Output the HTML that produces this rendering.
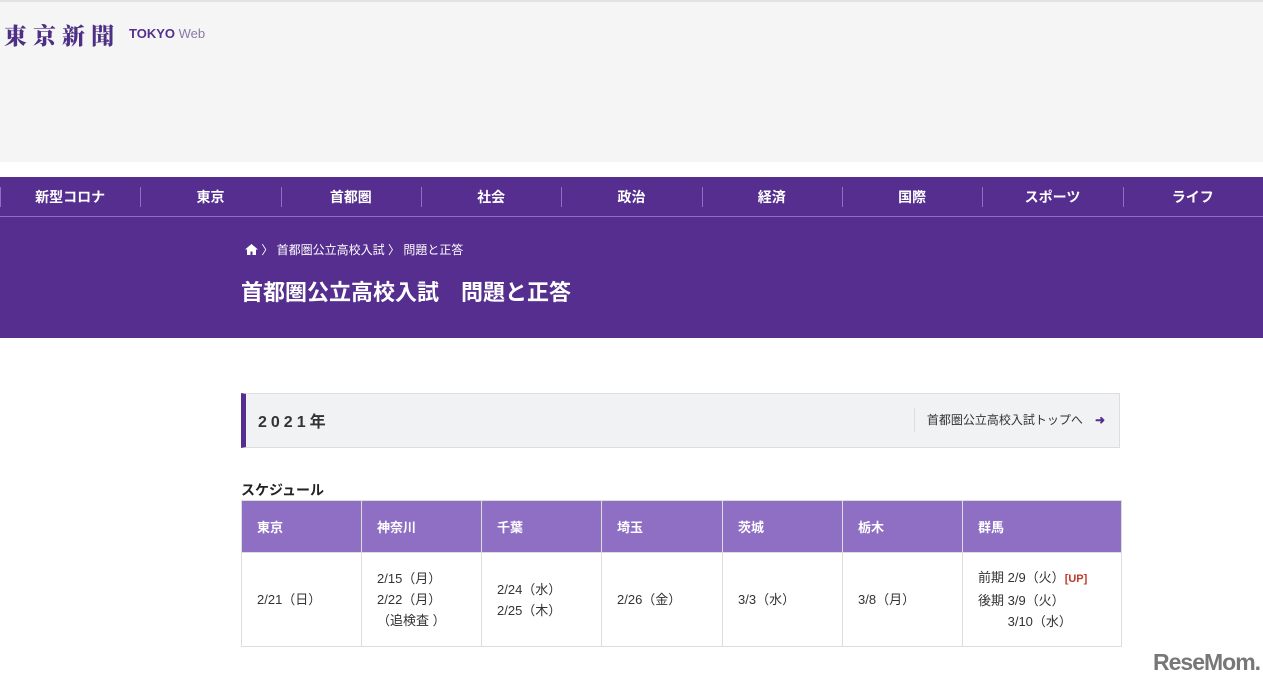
<html><head><style>
body{margin:0;width:1263px;height:685px;overflow:hidden;background:#fff;font-family:"Liberation Sans","Noto Sans CJK JP",sans-serif;position:relative}
.top{position:absolute;left:0;top:0;width:1263px;height:162px;background:#f5f5f5;border-top:2px solid #e2e2e2;box-sizing:border-box}
.logo{position:absolute;left:4px;top:16px;font-family:"Noto Serif CJK SC",serif;font-weight:900;font-size:23px;color:#4e2f86;letter-spacing:6px}
.tw{position:absolute;left:129px;top:24px;font-size:13px;color:#552e8f;font-weight:bold}
.tw span{font-weight:normal;color:#8a7aa8}
.nav{position:absolute;left:0;top:177px;width:1263px;height:40px;background:#552e8f;border-bottom:1px solid #8e6fc4;box-sizing:border-box;display:flex}
.nav div{flex:1;text-align:center;color:#fff;font-weight:bold;font-size:14px;line-height:40px;position:relative}
.nav div:before{content:"";position:absolute;left:0;top:10px;height:20px;border-left:1px solid #8e6fc4}
.hd{position:absolute;left:0;top:217px;width:1263px;height:121px;background:#552e8f;color:#fff}
.bc{position:absolute;left:245px;top:24px;font-size:12px}
.h1{position:absolute;left:241px;top:58px;font-size:22px;font-weight:bold}
.box{position:absolute;left:241px;top:393px;width:879px;height:55px;background:#f1f2f4;border:1px solid #ddd;border-left:5px solid #552e8f;box-sizing:border-box}
.box b{position:absolute;left:12px;top:14px;font-size:16px;letter-spacing:4px;color:#333}
.box .r{position:absolute;right:0;top:14px;height:24px;border-left:1px solid #ddd;padding:0 14px 0 12px;font-size:12px;color:#333;line-height:24px}
.sch{position:absolute;left:241px;top:480px;font-size:14px;font-weight:bold;color:#222}
table{position:absolute;left:241px;top:500px;width:880px;border-collapse:collapse;table-layout:fixed}
th{background:#8e6fc4;color:#fff;font-size:13px;text-align:left;padding-left:15px;height:52px;border:1px solid #ddd;box-sizing:border-box}
td{height:94px;font-size:13px;color:#333;padding-left:15px;border:1px solid #ddd;line-height:21px}
.up{color:#c0392b;font-size:11px;font-weight:bold}
.rm{position:absolute;left:1153px;top:649px;font-size:23px;font-weight:bold;color:#777;letter-spacing:-1px}
</style></head><body>
<div class="top"><div class="logo">東京新聞</div><div class="tw">TOKYO <span>Web</span></div></div>
<div class="nav"><div>新型コロナ</div><div>東京</div><div>首都圏</div><div>社会</div><div>政治</div><div>経済</div><div>国際</div><div>スポーツ</div><div>ライフ</div></div>
<div class="hd"><div class="bc"><svg width="13" height="11" viewBox="0 0 13 11" style="vertical-align:-1px"><path d="M6.5 0L0 5.5h2V11h3.5V7.5h2V11H11V5.5h2z" fill="#fff"/></svg> 〉 首都圏公立高校入試 〉 問題と正答</div><div class="h1">首都圏公立高校入試　問題と正答</div></div>
<div class="box"><b>2021年</b><div class="r">首都圏公立高校入試トップへ　<span style="color:#552e8f;font-weight:bold">➜</span></div></div>
<div class="sch">スケジュール</div>
<table><colgroup><col style="width:120px"><col style="width:120px"><col style="width:120px"><col style="width:121px"><col style="width:120px"><col style="width:120px"><col style="width:159px"></colgroup>
<tr><th>東京</th><th>神奈川</th><th>千葉</th><th>埼玉</th><th>茨城</th><th>栃木</th><th>群馬</th></tr>
<tr><td>2/21（日）</td><td>2/15（月）<br>2/22（月）<br>（追検査 ）</td><td>2/24（水）<br>2/25（木）</td><td>2/26（金）</td><td>3/3（水）</td><td>3/8（月）</td><td style="white-space:nowrap">前期 2/9（火）<span class="up">[UP]</span><br>後期 3/9（火）<br>　　 3/10（水）</td></tr></table>
<div class="rm">ReseMom.</div>
</body></html>
